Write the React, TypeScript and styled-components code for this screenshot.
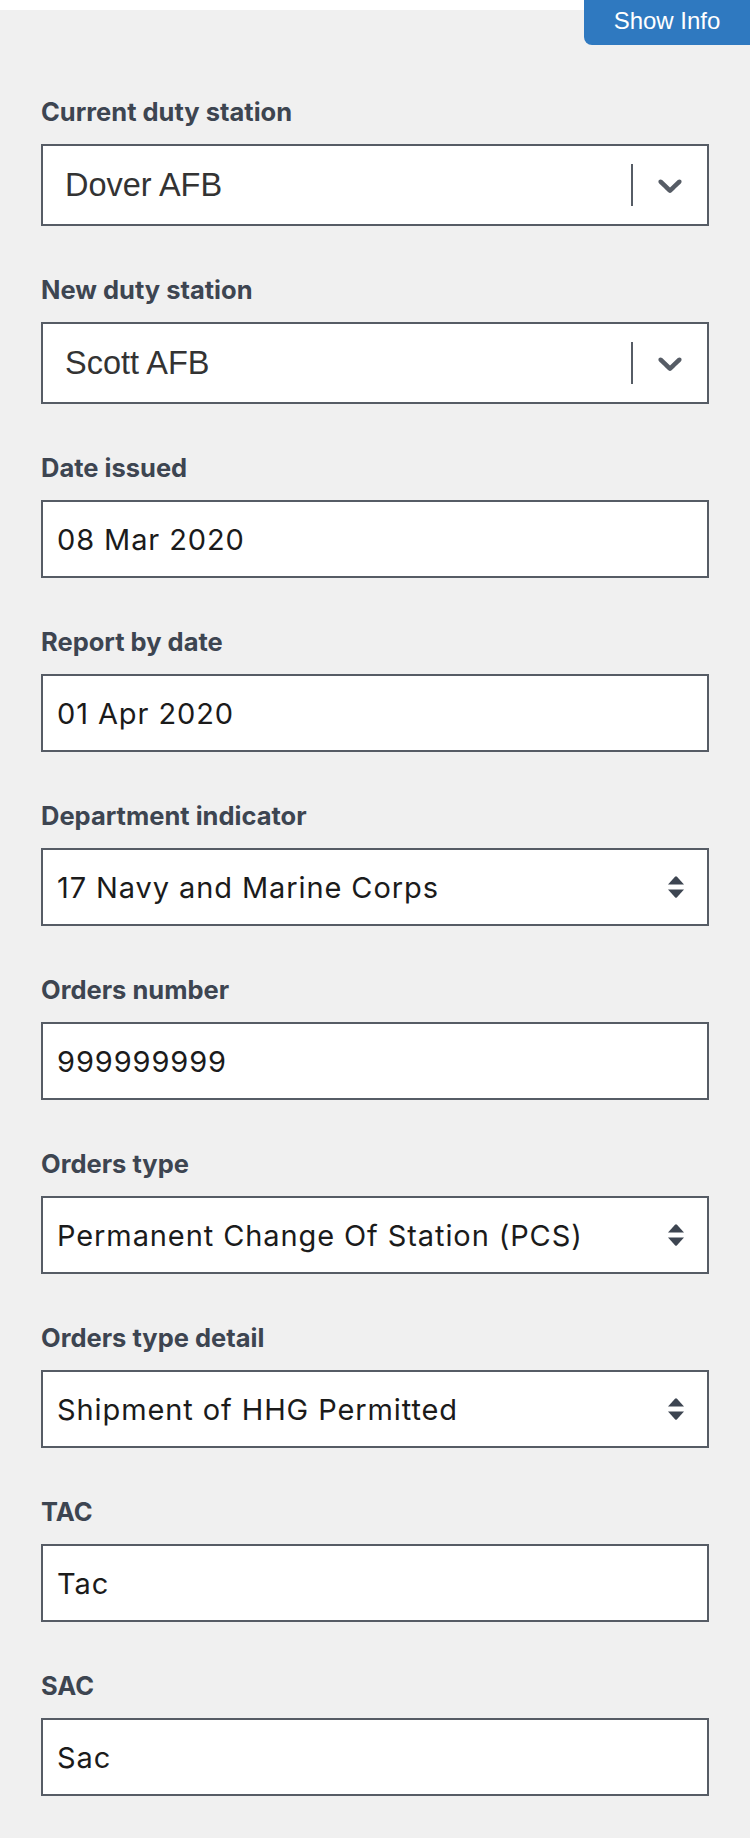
import React from "react";
import styled, { createGlobalStyle } from "styled-components";

const GlobalStyle = createGlobalStyle`
  html, body {
    margin: 0;
    padding: 0;
    background: #f0f0f0;
  }
  * { box-sizing: border-box; }
`;

const Page = styled.div`
  position: relative;
  min-height: 1838px;
  background: #f0f0f0;
`;

const TopStrip = styled.div`
  height: 10px;
  background: #ffffff;
`;

const InfoButton = styled.button`
  position: absolute;
  top: 0;
  right: 0;
  width: 166px;
  height: 45px;
  padding: 0 0 4px 0;
  border: none;
  border-bottom-left-radius: 8px;
  background: #2f79c0;
  color: #ffffff;
  font-family: "Liberation Sans", Arial, sans-serif;
  font-size: 24px;
  line-height: 1;
  cursor: pointer;
`;

const Form = styled.form`
  display: flex;
  flex-direction: column;
  gap: 49px;
  padding: 87px 41px 42px;
`;

const Field = styled.div`
  display: flex;
  flex-direction: column;
`;

const Label = styled.label`
  display: block;
  margin-bottom: 17px;
  font-family: Inter, "Liberation Sans", sans-serif;
  font-weight: 700;
  font-size: 25.5px;
  line-height: 30px;
  color: #3d4551;
`;

const ComboBox = styled.div`
  display: flex;
  align-items: center;
  height: 82px;
  border: 2px solid #565c65;
  background: #ffffff;
`;

const ComboValue = styled.div`
  flex: 1;
  padding-left: 22px;
  font-family: "Liberation Sans", Arial, sans-serif;
  font-size: 32.5px;
  color: #333333;
`;

const Separator = styled.span`
  align-self: center;
  width: 2px;
  height: 42px;
  background: #565c65;
`;

const Indicator = styled.span`
  display: flex;
  align-items: center;
  justify-content: center;
  width: 74px;
  color: #565c65;
`;

const TextInput = styled.input`
  display: block;
  width: 100%;
  height: 78px;
  margin: 0;
  padding: 0 14px;
  border: 2px solid #565c65;
  border-radius: 0;
  background: #ffffff;
  font-family: Inter, "Liberation Sans", sans-serif;
  font-size: 29px;
  letter-spacing: 0.9px;
  color: #1b1b1b;
  outline: none;
`;

const SelectBox = styled.div`
  display: flex;
  align-items: center;
  height: 78px;
  border: 2px solid #565c65;
  background: #ffffff;
  padding-right: 23px;
`;

const NativeSelect = styled.select`
  flex: 1;
  height: 100%;
  padding: 0 14px;
  border: none;
  background: transparent;
  appearance: none;
  -webkit-appearance: none;
  font-family: Inter, "Liberation Sans", sans-serif;
  font-size: 29px;
  letter-spacing: 0.9px;
  color: #1b1b1b;
  outline: none;
`;

const Chevron = () => (
  <svg width="40" height="40" viewBox="0 0 20 20" fill="currentColor" aria-hidden="true">
    <path d="M4.516 7.548c0.436-0.446 1.043-0.481 1.576 0l3.908 3.747 3.908-3.747c0.533-0.481 1.141-0.446 1.574 0 0.436 0.445 0.408 1.197 0 1.615-0.406 0.418-4.695 4.502-4.695 4.502-0.217 0.223-0.502 0.335-0.787 0.335s-0.57-0.112-0.789-0.335c0 0-4.287-4.084-4.695-4.502s-0.436-1.17 0-1.615z" />
  </svg>
);

const Unfold = () => (
  <svg width="16" height="22" viewBox="0 0 16 22" fill="#3d4551" aria-hidden="true">
    <path d="M7 0.8 Q8 -0.2 9 0.8 L16 8.5 L0 8.5 Z" />
    <path d="M0 13.5 L16 13.5 L9 21.2 Q8 22.2 7 21.2 Z" />
  </svg>
);

type ComboProps = { label: string; value: string };
const ComboField: React.FC<ComboProps> = ({ label, value }) => (
  <Field>
    <Label>{label}</Label>
    <ComboBox>
      <ComboValue>{value}</ComboValue>
      <Separator />
      <Indicator>
        <Chevron />
      </Indicator>
    </ComboBox>
  </Field>
);

type InputProps = { label: string; value: string };
const InputField: React.FC<InputProps> = ({ label, value }) => (
  <Field>
    <Label>{label}</Label>
    <TextInput value={value} readOnly />
  </Field>
);

const SelectField: React.FC<InputProps> = ({ label, value }) => (
  <Field>
    <Label>{label}</Label>
    <SelectBox>
      <NativeSelect value={value} onChange={() => {}}>
        <option value={value}>{value}</option>
      </NativeSelect>
      <Unfold />
    </SelectBox>
  </Field>
);

export default function App() {
  return (
    <Page>
      <GlobalStyle />
      <TopStrip />
      <InfoButton type="button">Show Info</InfoButton>
      <Form onSubmit={(e) => e.preventDefault()}>
        <ComboField label="Current duty station" value="Dover AFB" />
        <ComboField label="New duty station" value="Scott AFB" />
        <InputField label="Date issued" value="08 Mar 2020" />
        <InputField label="Report by date" value="01 Apr 2020" />
        <SelectField label="Department indicator" value="17 Navy and Marine Corps" />
        <InputField label="Orders number" value="999999999" />
        <SelectField label="Orders type" value="Permanent Change Of Station (PCS)" />
        <SelectField label="Orders type detail" value="Shipment of HHG Permitted" />
        <InputField label="TAC" value="Tac" />
        <InputField label="SAC" value="Sac" />
      </Form>
    </Page>
  );
}
